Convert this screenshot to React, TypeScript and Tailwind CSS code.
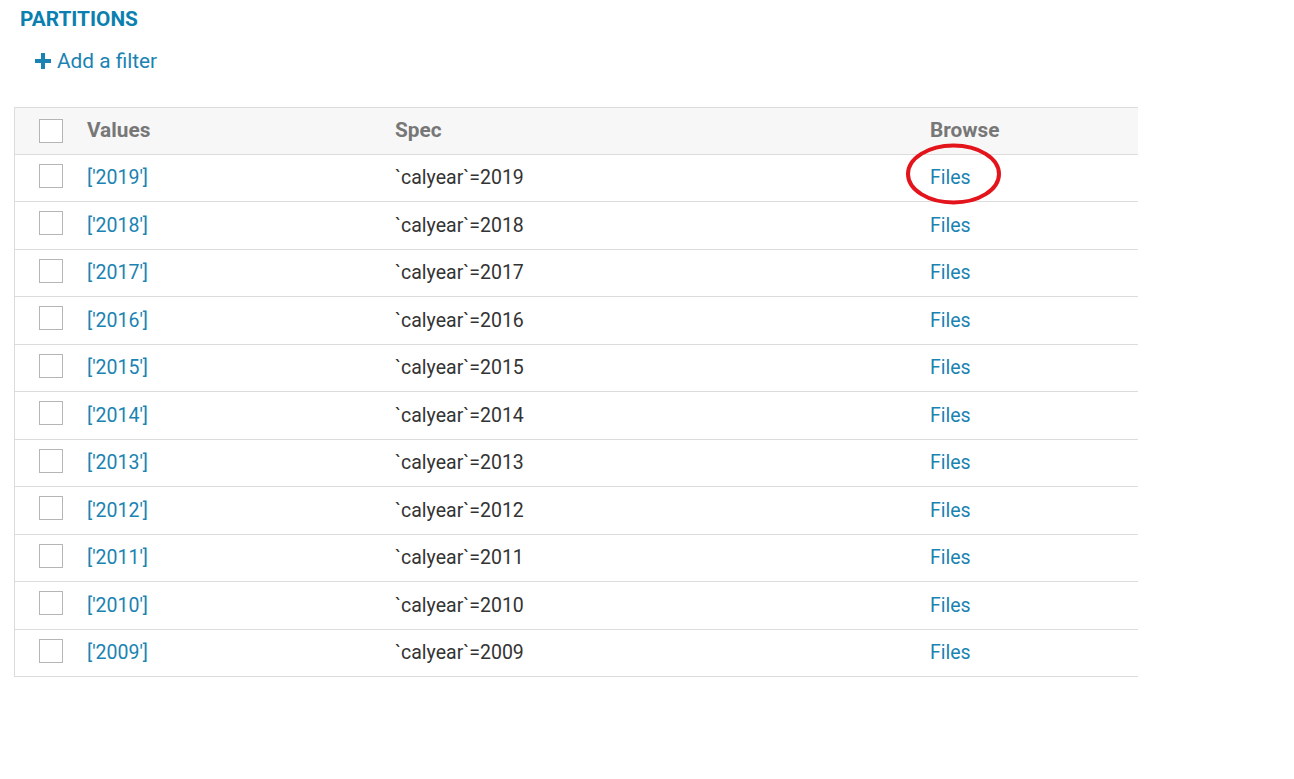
import React from "react";

const years = ["2019","2018","2017","2016","2015","2014","2013","2012","2011","2010","2009"];

function Box() {
  return <div className="w-[24px] h-[24px] border border-[#b5b5b5] bg-white" />;
}

export default function App() {
  return (
    <div className="min-h-[779px] w-[1294px] bg-white text-[19.5px] text-[#333] relative" style={{ fontFamily: "Roboto, 'Liberation Sans', sans-serif" }}>
      <div className="pl-[20px] pt-[6px] text-[20.8px] font-bold text-[#0b80b0] leading-[26px]">PARTITIONS</div>
      <div className="pl-[35px] mt-[15px] flex items-center gap-[6px] text-[20.8px] text-[#1a83b2] leading-[28px]">
        <svg width="16" height="16" viewBox="0 0 16 16"><path d="M6 0h4v6h6v4h-6v6h-4v-6h-6v-4h6z" fill="#1a83b2"/></svg>
        <span>Add a filter</span>
      </div>
      <div className="ml-[14px] mt-[32px] w-[1124px] border-l border-[#dcdcdc]">
        <div className="flex items-center h-[48px] bg-[#f7f7f7] border-t border-b border-[#dcdcdc] font-bold text-[#777] text-[20.8px]">
          <div className="w-[72px] pl-[24px]"><Box /></div>
          <div className="w-[308px]">Values</div>
          <div className="w-[535px]">Spec</div>
          <div>Browse</div>
        </div>
        {years.map((y, i) => (
          <div key={y} className={`flex items-center ${i % 2 === 0 ? "h-[47px]" : "h-[48px]"} border-b border-[#dcdcdc]`}>
            <div className="w-[72px] pl-[24px] -mt-[5px]"><Box /></div>
            <div className="w-[308px] text-[#1a83b2]">['{y}']</div>
            <div className="w-[535px] text-[#333]">`calyear`={y}</div>
            <div className="text-[#1a83b2]">Files</div>
          </div>
        ))}
      </div>
      <svg className="absolute left-[905px] top-[142px]" width="97" height="64" viewBox="0 0 97 64">
        <ellipse cx="48.5" cy="32" rx="45.5" ry="28.5" fill="none" stroke="#e3141c" strokeWidth="4" />
      </svg>
    </div>
  );
}
